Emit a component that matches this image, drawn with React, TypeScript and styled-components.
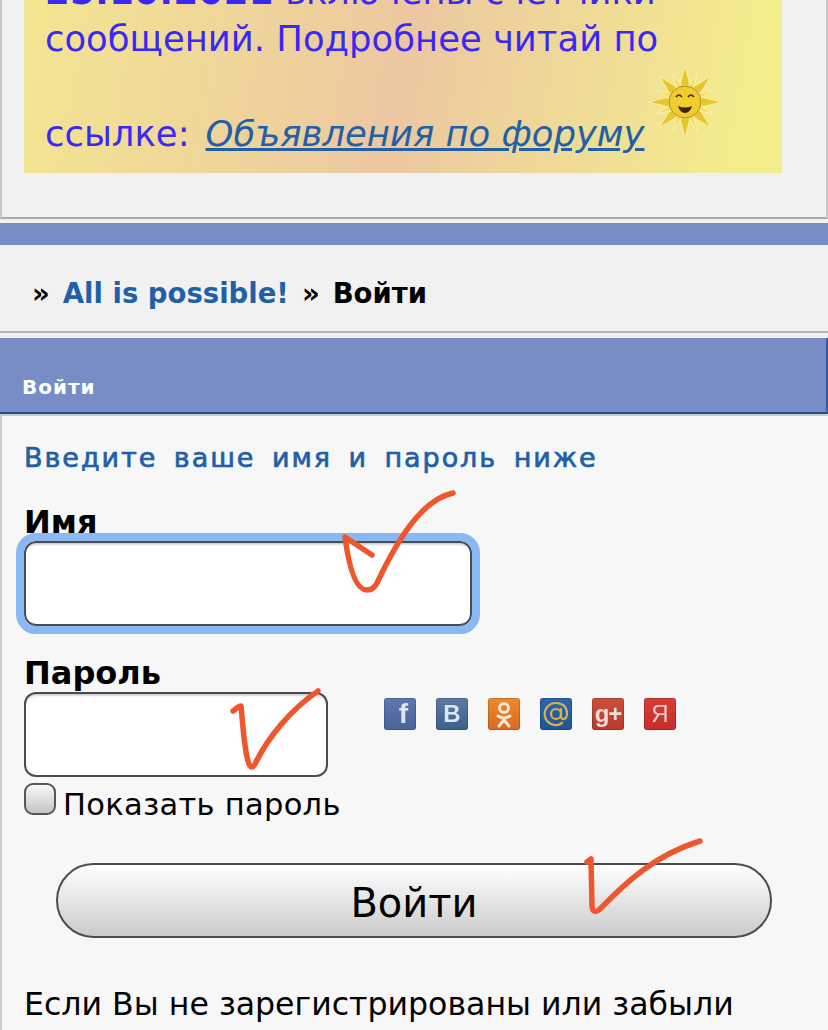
import type { ReactNode } from "react";
import styled, { createGlobalStyle } from "styled-components";

const GlobalStyle = createGlobalStyle`
  html, body {
    margin: 0;
    padding: 0;
    height: 1030px;
    overflow: hidden;
    background: #f1f1f1;
  }
  * {
    box-sizing: border-box;
  }
`;

const Page = styled.div`
  position: relative;
  width: 828px;
  height: 1030px;
  overflow: hidden;
  font-family: "DejaVu Sans", Verdana, sans-serif;
  color: #000;
`;

const TopPanel = styled.div`
  height: 219px;
  padding: 0 44px 0 24px;
  background: #f1f1f1;
  border-left: 2px solid #c8c8c8;
  border-right: 2px solid #c8c8c8;
  border-bottom: 2px solid #aaaaaa;
`;

const Notice = styled.div`
  display: flex;
  flex-direction: column;
  justify-content: flex-end;
  height: 173px;
  margin-left: -2px;
  padding: 0 0 0 21px;
  overflow: hidden;
  font-size: 35.4px;
  color: #3a28f5;
  background: linear-gradient(100deg, #f3e691 0%, #ecc7a1 50%, #f3ee8c 95%);
`;

const NoticeLine = styled.div<{ $height: number; $pad?: number }>`
  display: flex;
  align-items: flex-end;
  height: ${(p) => p.$height}px;
  padding-bottom: ${(p) => p.$pad ?? 0}px;
  line-height: 47px;
  white-space: nowrap;
  flex-shrink: 0;
`;

const NoticeDate = styled.b`
  letter-spacing: 0.5px;
`;

const NoticeLink = styled.a`
  margin-left: 16px;
  font-style: italic;
  color: #2060a8;
  text-decoration: underline;
`;

const Sun = styled.svg`
  width: 72px;
  height: 72px;
  margin: 0 0 19px 5px;
  flex-shrink: 0;
`;

const Band = styled.div`
  height: 22px;
  margin-top: 4px;
  background: #788dc6;
`;

const Breadcrumb = styled.div`
  display: flex;
  align-items: center;
  gap: 13px;
  height: 88px;
  padding: 10px 0 0 32px;
  font-size: 27.5px;
  font-weight: bold;
  background: #f1f1f1;
  border-bottom: 2px solid #b4b4b4;
`;

const CrumbLink = styled.a`
  color: #2060a8;
`;

const SectionHead = styled.div`
  display: flex;
  align-items: flex-end;
  height: 76px;
  margin-top: 5px;
  padding: 0 0 13px 22px;
  font-size: 20px;
  font-weight: bold;
  letter-spacing: 1px;
  color: #fff;
  background: #788dc6;
  border-bottom: 2px solid #1f4f8f;
  border-right: 2px solid #3d5a9c;
`;

const Content = styled.div`
  height: 620px;
  padding: 25px 0 0 22px;
  background: #f7f7f7;
  border-top: 2px solid #cccccc;
  border-left: 2px solid #cccccc;
`;

const Intro = styled.div`
  height: 34px;
  font-size: 27px;
  line-height: 34px;
  font-weight: 500;
  letter-spacing: 1.95px;
  word-spacing: 6px;
  color: #2060a8;
  -webkit-text-stroke: 0.7px #2060a8;
`;

const FieldLabel = styled.label<{ $top: number }>`
  display: block;
  height: 38px;
  margin-top: ${(p) => p.$top}px;
  font-size: 32px;
  line-height: 38px;
  font-weight: bold;
`;

const TextInput = styled.input<{ $width: number; $focused?: boolean }>`
  display: block;
  width: ${(p) => p.$width}px;
  height: 85px;
  padding: 0 12px;
  background: #fff;
  border: 2px solid #4c4c4c;
  border-radius: 12px;
  box-shadow: inset 0 3px 3px -2px rgba(0, 0, 0, 0.3);
  appearance: none;
  outline: ${(p) => (p.$focused ? "8px solid #8ab8f5" : "none")};
  outline-offset: 0;
`;

const PasswordRow = styled.div`
  display: flex;
  align-items: flex-start;
`;

const SocialList = styled.div`
  display: flex;
  gap: 20px;
  margin: 6px 0 0 56px;
`;

const SocialTile = styled.a<{ $top: string; $bottom: string; $ink: string; $size: number; $weight?: number }>`
  display: flex;
  align-items: center;
  justify-content: center;
  width: 32px;
  height: 32px;
  overflow: hidden;
  font-family: "Liberation Sans", Arial, sans-serif;
  font-size: ${(p) => p.$size}px;
  font-weight: ${(p) => p.$weight ?? 700};
  line-height: 1;
  color: ${(p) => p.$ink};
  background: linear-gradient(${(p) => p.$top}, ${(p) => p.$bottom});
  border-radius: 3px;
  box-shadow: inset 0 0 0 1px rgba(0, 0, 0, 0.16);
  filter: blur(0.6px);
`;

const FacebookGlyph = styled.span`
  margin-left: 7px;
`;

const GoogleGlyph = styled.span`
  letter-spacing: -1px;
`;

const ShowRow = styled.div`
  display: flex;
  align-items: flex-start;
  gap: 7px;
  margin-top: 6px;
`;

const CheckBox = styled.input`
  width: 32px;
  height: 32px;
  margin: 0;
  appearance: none;
  background: linear-gradient(#f8f8f8, #c4c4c4);
  border: 2px solid #555555;
  border-radius: 9px;
`;

const ShowLabel = styled.label`
  font-size: 30.5px;
  line-height: 44px;
  letter-spacing: 0.3px;
`;

const SubmitButton = styled.button`
  display: block;
  width: 716px;
  height: 75px;
  margin: 36px 0 0 32px;
  padding: 5px 0 0;
  font-family: inherit;
  font-size: 40px;
  color: #000;
  background: linear-gradient(#ffffff, #cbcbcb);
  border: 2px solid #4c4c4c;
  border-radius: 38px;
`;

const Footnote = styled.p`
  margin: 46px 0 0;
  font-size: 31.6px;
  line-height: 40px;
  white-space: nowrap;
`;

const Scribbles = styled.svg`
  position: absolute;
  top: 0;
  left: 0;
  pointer-events: none;
`;

type Social = {
  id: string;
  top: string;
  bottom: string;
  ink: string;
  size: number;
  weight?: number;
  glyph: ReactNode;
};

const socials: Social[] = [
  { id: "fb", top: "#5f78ae", bottom: "#48629c", ink: "#dfe5f2", size: 28, glyph: <FacebookGlyph>f</FacebookGlyph> },
  { id: "vk", top: "#5b7ba6", bottom: "#3d5f8c", ink: "#dde5ef", size: 24, glyph: "В" },
  {
    id: "ok",
    top: "#ee8a2e",
    bottom: "#d8691f",
    ink: "#fff",
    size: 20,
    glyph: (
      <svg width="20" height="28" viewBox="0 0 20 28" fill="none" stroke="#f6e6d2" strokeWidth="3" strokeLinecap="round">
        <circle cx="10" cy="8" r="4.5" />
        <path d="M4 16q6 4 12 0M10 18v2M10 20l-5 6M10 20l5 6" />
      </svg>
    ),
  },
  {
    id: "mail",
    top: "#2a68ae",
    bottom: "#1f5596",
    ink: "#fff",
    size: 20,
    glyph: (
      <svg width="26" height="26" viewBox="0 0 26 26" fill="none" stroke="#e2b040" strokeWidth="2.2" strokeLinecap="round">
        <circle cx="13" cy="13" r="5" />
        <path d="M18 8v7q0 3.5 3 3t3-6q-.5-9.5-11-10a11 11 0 1 0 6 20" />
      </svg>
    ),
  },
  { id: "gplus", top: "#c8503e", bottom: "#b93a2b", ink: "#f3dcd8", size: 24, glyph: <GoogleGlyph>g+</GoogleGlyph> },
  { id: "ya", top: "#d93c38", bottom: "#c42f2c", ink: "#f5c8c4", size: 24, weight: 400, glyph: "Я" },
];

const rays = Array.from({ length: 16 }, (_, i) => i * 22.5);

export default function App() {
  return (
    <Page>
      <GlobalStyle />
      <TopPanel>
        <Notice>
          <NoticeLine $height={47}>
            <NoticeDate>25.10.2021</NoticeDate>&nbsp;включены счетчики
          </NoticeLine>
          <NoticeLine $height={47}>сообщений. Подробнее читай по</NoticeLine>
          <NoticeLine $height={111} $pad={16}>
            ссылке:
            <NoticeLink>Объявления по форуму</NoticeLink>
            <Sun viewBox="0 0 72 72">
              {rays.map((deg, i) => (
                <polygon
                  key={deg}
                  points={i % 2 ? "33,20 36,5 39,20" : "31,20 36,0 41,20"}
                  fill={i % 2 ? "#f6e060" : "#e8c52a"}
                  stroke="#fdf6c0"
                  strokeWidth="0.7"
                  transform={`rotate(${deg} 36 36)`}
                />
              ))}
              <circle cx="36" cy="36" r="16" fill="#f0cc2c" stroke="#a88a30" strokeWidth="1" />
              <path d="M27 31q3-4 6 0M39 31q3-4 6 0" fill="none" stroke="#4a3210" strokeWidth="1.6" />
              <path d="M29 40q7 3 14 0q-2 7-7 7t-7-7z" fill="#3a2208" />
            </Sun>
          </NoticeLine>
        </Notice>
      </TopPanel>
      <Band />
      <Breadcrumb>
        <span>»</span>
        <CrumbLink>All is possible!</CrumbLink>
        <span>»</span>
        <span>Войти</span>
      </Breadcrumb>
      <SectionHead>Войти</SectionHead>
      <Content>
        <Intro>Введите ваше имя и пароль ниже</Intro>
        <FieldLabel $top={28}>Имя</FieldLabel>
        <TextInput $width={448} $focused />
        <FieldLabel $top={28}>Пароль</FieldLabel>
        <PasswordRow>
          <TextInput $width={304} type="password" />
          <SocialList>
            {socials.map((s) => (
              <SocialTile key={s.id} $top={s.top} $bottom={s.bottom} $ink={s.ink} $size={s.size} $weight={s.weight}>
                {s.glyph}
              </SocialTile>
            ))}
          </SocialList>
        </PasswordRow>
        <ShowRow>
          <CheckBox type="checkbox" />
          <ShowLabel>Показать пароль</ShowLabel>
        </ShowRow>
        <SubmitButton>Войти</SubmitButton>
        <Footnote>Если Вы не зарегистрированы или забыли</Footnote>
      </Content>
      <Scribbles width="828" height="1030" fill="none" stroke="#f0562e" strokeWidth="5.5" strokeLinecap="round" strokeLinejoin="round">
        <path d="M372 555 L345 537 C348 560 354 590 367 590 C372 590 375 587 377 583 C395 545 420 500 453 493" />
        <path d="M233 711 C236 709 238 706 241 706 C243 725 244 750 249 764 C251 769 254 767 256 762 C268 738 290 710 318 691" />
        <path d="M587 862 L591 859 L592 905 C592 912 596 913 600 909 C625 883 655 855 700 841" />
      </Scribbles>
    </Page>
  );
}
